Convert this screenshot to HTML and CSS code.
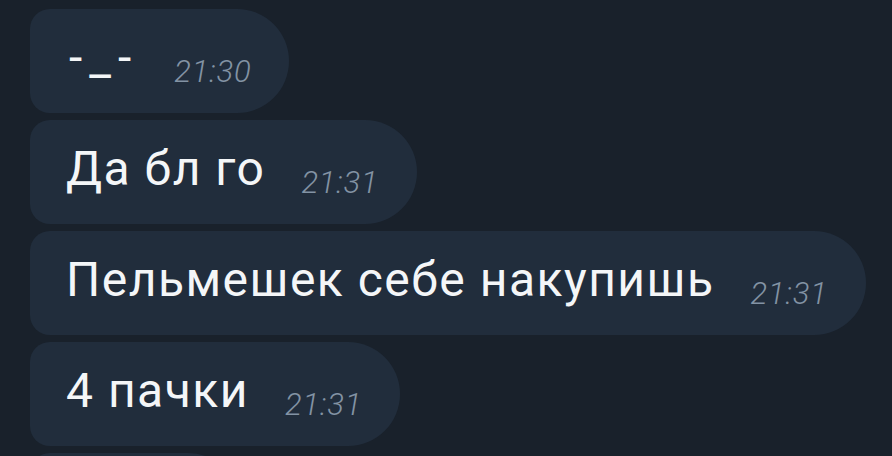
FILE: index.html
```html
<!DOCTYPE html>
<html lang="ru">
<head>
    <meta charset="UTF-8">
    <meta name="viewport" content="width=device-width, initial-scale=1.0">
    <title>Чат</title>
    <link rel="stylesheet" href="styles.css">
</head>
<body>
    <div class="chat">
        <div class="bubble">
            <span class="text face">-_-</span>
            <span class="time">21:30</span>
        </div>
        <div class="bubble">
            <span class="text">Да бл го</span>
            <span class="time">21:31</span>
        </div>
        <div class="bubble">
            <span class="text">Пельмешек себе накупишь</span>
            <span class="time">21:31</span>
        </div>
        <div class="bubble">
            <span class="text">4 пачки</span>
            <span class="time">21:31</span>
        </div>
        <div class="bubble stub">
            <span class="text">&nbsp;</span>
        </div>
    </div>
</body>
</html>
```
FILE: styles.css
```css
html, body {
    height: 100%;
    overflow: hidden;
}

body {
    background-color: #19212b;
    font-family: 'Roboto', 'Noto Sans', sans-serif;
    margin: 0; /* Remove default margin */
}

.chat {
    display: flex;
    flex-direction: column;
    align-items: flex-start;
    gap: 7px;
    padding: 9px 0 0 30px;
}

.bubble {
    display: flex;
    align-items: center;
    height: 104px;
    box-sizing: border-box;
    padding: 0 38px 0 36px;
    background-color: #212d3c;
    border-radius: 20px 52px 52px 20px;
    flex-shrink: 0;
}

.stub {
    width: 210px;
}

.text {
    color: #f4f6f8;
    font-size: 48px;
    line-height: 56px;
    letter-spacing: 1.5px;
    margin-top: -6px;
}

/* the little face is drawn wider in the original font */
.face {
    letter-spacing: 7px;
    padding-left: 3px;
}

.time {
    color: #8393a4;
    font-size: 31px;
    font-weight: 300;
    font-style: italic;
    line-height: 36px;
    letter-spacing: 0.8px;
    margin-left: 36px;
    margin-top: 22px; /* sits lower than the message text */
}
```
